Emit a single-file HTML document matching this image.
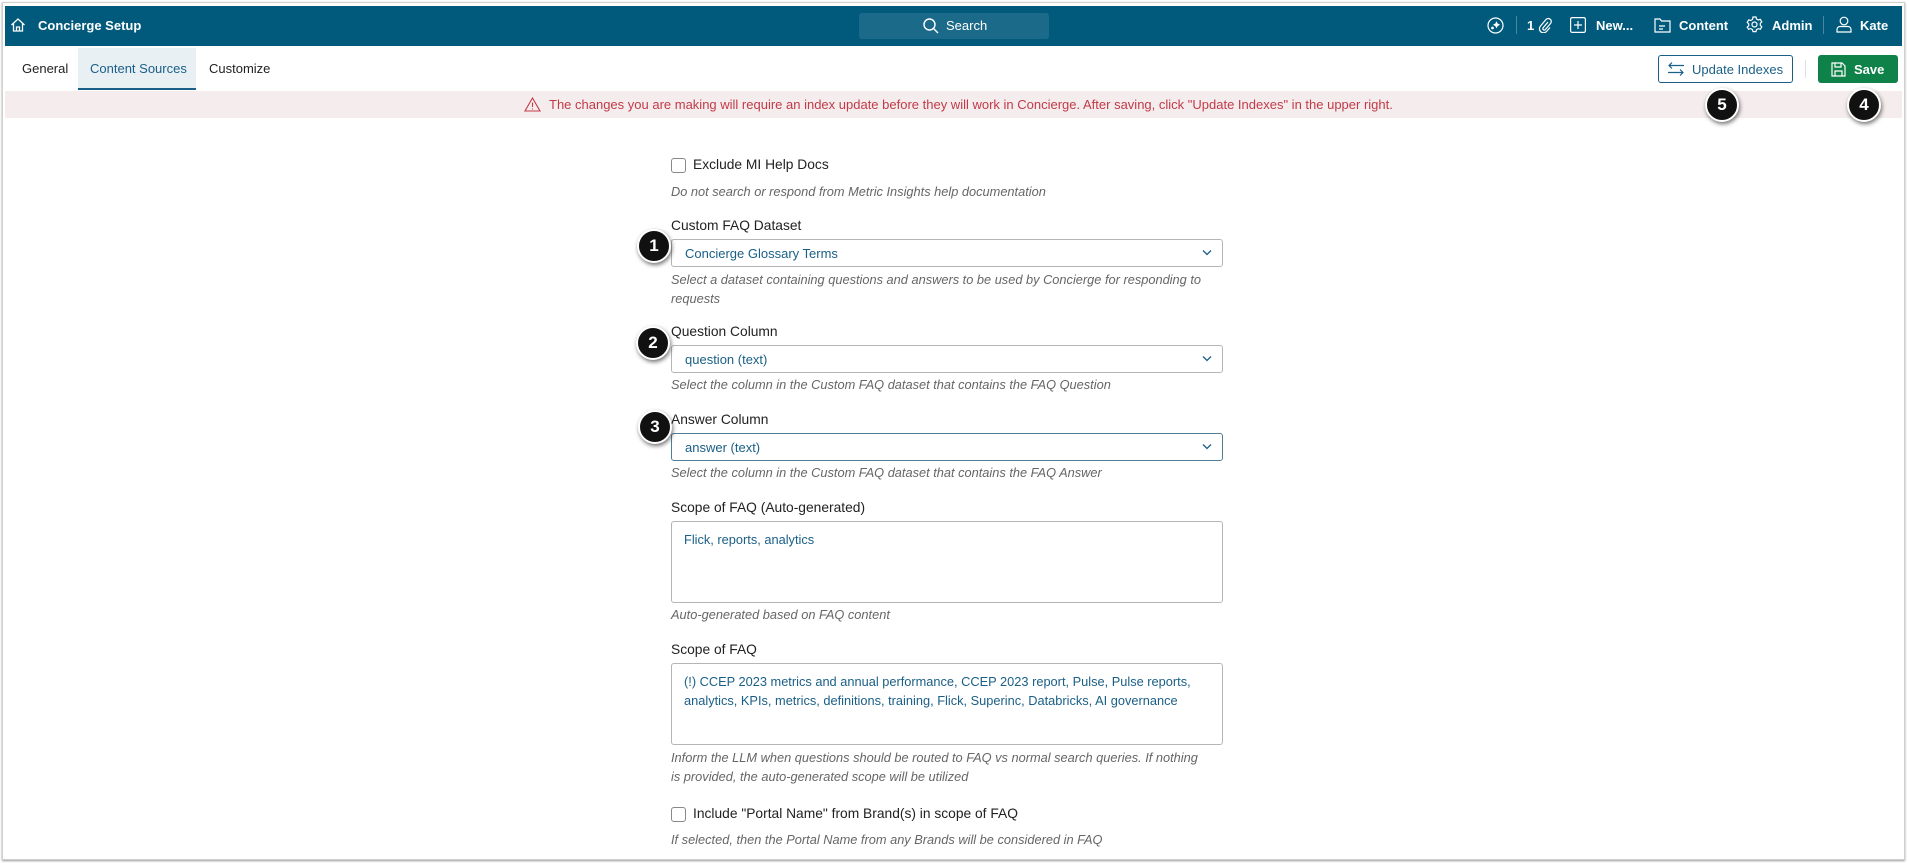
<!DOCTYPE html>
<html><head><meta charset="utf-8"><style>
*{box-sizing:border-box;margin:0;padding:0}
body{width:1909px;height:863px;background:#fff;font-family:"Liberation Sans",Arial,sans-serif;position:relative;overflow:hidden;color:#222}
.a{position:absolute;white-space:nowrap}
.frame{position:absolute;left:2px;top:2px;width:1903px;height:858px;border:1px solid #d0d0d0;box-shadow:0 1px 2px #999}
.hdr{position:absolute;left:5px;top:6px;width:1897px;height:40px;background:#015a7c}
.w{color:#fff;font-size:13px;font-weight:bold}
.lbl{font-size:13.8px;color:#222}
.help{font-size:12.8px;color:#666;font-style:italic}
.sel{position:absolute;left:671px;width:552px;height:28px;border:1px solid #b5b5b5;border-radius:3px;font-size:13px;color:#1a5f86;padding:6px 13px}
.sel svg{position:absolute;right:10px;top:9px}
.ta{position:absolute;left:671px;width:552px;border:1px solid #b5b5b5;border-radius:3px;font-size:12.8px;color:#1a5f86;padding:8px 12px;line-height:19px}
.cb{position:absolute;left:671px;width:15px;height:15px;border:1px solid #888;border-radius:3px}
.b{position:absolute;width:34px;height:34px;border-radius:50%;background:#111;border:2px solid #fff;box-shadow:1px 2px 4px rgba(0,0,0,.55);color:#fff;font-weight:bold;font-size:17px;text-align:center;line-height:30px}
</style></head><body>
<div class="frame"></div>
<div class="hdr"></div>
<svg class="a" style="left:10px;top:17px" width="16" height="16" viewBox="0 0 16 16" fill="none" stroke="#fff" stroke-width="1.3"><path d="M1.5 8 8 2l6.5 6M3.5 6.5V14h9V6.5M6.5 14v-4h3v4"/></svg>
<div class="a w" style="left:38px;top:18px">Concierge Setup</div>
<div class="a" style="left:859px;top:13px;width:190px;height:26px;background:#1c6a89;border-radius:3px"></div>
<svg class="a" style="left:922px;top:17px" width="18" height="18" viewBox="0 0 18 18" fill="none" stroke="#fff" stroke-width="1.4"><circle cx="7.5" cy="7.5" r="5.5"/><path d="M11.5 11.5 16 16"/></svg>
<div class="a" style="left:946px;top:18px;color:#fff;font-size:13px">Search</div>
<svg class="a" style="left:1487px;top:17px" width="17" height="17" viewBox="0 0 17 17" fill="none" stroke="#fff" stroke-width="1.2"><circle cx="8.5" cy="8.5" r="7.5"/><path d="M9.5 5.5l.8 1.5 1.5.8-1.5.8-.8 1.5-.8-1.5-1.5-.8 1.5-.8z" fill="#fff"/><circle cx="5.5" cy="11" r=".8" fill="#fff"/></svg>
<div class="a" style="left:1516px;top:16px;width:1px;height:18px;background:#4b86a0"></div>
<div class="a w" style="left:1527px;top:18px">1</div>
<svg class="a" style="left:1538px;top:17px" width="14" height="16" viewBox="0 0 14 16" fill="none" stroke="#fff" stroke-width="1.2"><path d="M10 5 5 11a1.5 1.5 0 0 0 2 2l5.5-6.5a3 3 0 0 0-4.5-4L2.5 9a4 4 0 0 0 6 5.5L12 10.5"/></svg>
<svg class="a" style="left:1570px;top:17px" width="16" height="16" viewBox="0 0 16 16" fill="none" stroke="#fff" stroke-width="1.2"><rect x=".6" y=".6" width="14.8" height="14.8" rx="1.5"/><path d="M8 4v8M4 8h8"/></svg>
<div class="a w" style="left:1596px;top:18px">New...</div>
<svg class="a" style="left:1654px;top:17px" width="17" height="16" viewBox="0 0 17 16" fill="none" stroke="#fff" stroke-width="1.2"><path d="M1 2h5l1.5 2H16v11H1z M5 9h6M5 12h4"/></svg>
<div class="a w" style="left:1679px;top:18px">Content</div>
<svg class="a" style="left:1746px;top:16px" width="17" height="17" viewBox="0 0 17 17" fill="none" stroke="#fff" stroke-width="1.2"><circle cx="8.5" cy="8.5" r="2.5"/><path d="M7 1h3l.5 2 1.8 1 2-.7 1.5 2.6-1.5 1.4v2l1.5 1.4-1.5 2.6-2-.7-1.8 1-.5 2H7l-.5-2-1.8-1-2 .7L1.2 11.2l1.5-1.4v-2L1.2 6.4l1.5-2.6 2 .7 1.8-1z"/></svg>
<div class="a w" style="left:1772px;top:18px">Admin</div>
<div class="a" style="left:1823px;top:16px;width:1px;height:18px;background:#4b86a0"></div>
<svg class="a" style="left:1836px;top:16px" width="16" height="17" viewBox="0 0 16 17" fill="none" stroke="#fff" stroke-width="1.2"><circle cx="8" cy="5" r="3.8"/><path d="M1 16v-2.5a3 3 0 0 1 3-3h8a3 3 0 0 1 3 3V16z"/></svg>
<div class="a w" style="left:1860px;top:18px">Kate</div>

<div class="a" style="left:78px;top:48px;width:118px;height:42px;background:#e8f0f4;border-bottom:2px solid #1a5f86"></div>
<div class="a lbl" style="left:22px;top:61px;font-size:13px">General</div>
<div class="a lbl" style="left:90px;top:61px;font-size:13px;color:#1a5f86">Content Sources</div>
<div class="a lbl" style="left:209px;top:61px;font-size:13px">Customize</div>

<div class="a" style="left:1658px;top:55px;width:135px;height:28px;border:1px solid #1a5f86;border-radius:3px;background:#fff"></div>
<svg class="a" style="left:1667px;top:61px" width="18" height="16" viewBox="0 0 18 16" fill="none" stroke="#1a5f86" stroke-width="1.2"><path d="M17 4.5H2M5 1.5l-3 3 3 3M1 11.5h15M13 8.5l3 3-3 3"/></svg>
<div class="a" style="left:1692px;top:62px;font-size:13px;color:#1a5f86">Update Indexes</div>
<div class="a" style="left:1805px;top:60px;width:1px;height:18px;background:#e0e0e0"></div>
<div class="a" style="left:1818px;top:55px;width:80px;height:28px;background:#0e8248;border-radius:3px"></div>
<svg class="a" style="left:1831px;top:62px" width="15" height="15" viewBox="0 0 15 15" fill="none" stroke="#fff" stroke-width="1.2"><path d="M1 1h10l3 3v10H1z M4 1v4h6V1M4 14V9h7v5"/></svg>
<div class="a w" style="left:1854px;top:62px">Save</div>

<div class="a" style="left:5px;top:91px;width:1897px;height:27px;background:#f5eded"></div>
<svg class="a" style="left:524px;top:97px" width="17" height="15" viewBox="0 0 17 15" fill="none" stroke="#c23a48" stroke-width="1.1"><path d="M8.5 1 16 14H1z M8.5 5.5v4.5M8.5 11.5v1"/></svg>
<div class="a" style="left:549px;top:97px;font-size:13px;color:#c23a48">The changes you are making will require an index update before they will work in Concierge. After saving, click "Update Indexes" in the upper right.</div>

<div class="cb" style="top:158px"></div>
<div class="a lbl" style="left:693px;top:157px">Exclude MI Help Docs</div>
<div class="a help" style="left:671px;top:184px">Do not search or respond from Metric Insights help documentation</div>

<div class="a lbl" style="left:671px;top:218px">Custom FAQ Dataset</div>
<div class="sel" style="top:239px">Concierge Glossary Terms<svg width="10" height="7" viewBox="0 0 10 7" fill="none" stroke="#1a5f86" stroke-width="1.3"><path d="M1 1.5 5 5.5 9 1.5"/></svg></div>
<div class="a help" style="left:671px;top:270px;line-height:19px">Select a dataset containing questions and answers to be used by Concierge for responding to<br>requests</div>

<div class="a lbl" style="left:671px;top:324px">Question Column</div>
<div class="sel" style="top:345px">question (text)<svg width="10" height="7" viewBox="0 0 10 7" fill="none" stroke="#1a5f86" stroke-width="1.3"><path d="M1 1.5 5 5.5 9 1.5"/></svg></div>
<div class="a help" style="left:671px;top:377px">Select the column in the Custom FAQ dataset that contains the FAQ Question</div>

<div class="a lbl" style="left:671px;top:412px">Answer Column</div>
<div class="sel" style="top:433px;border-color:#4f7f96">answer (text)<svg width="10" height="7" viewBox="0 0 10 7" fill="none" stroke="#1a5f86" stroke-width="1.3"><path d="M1 1.5 5 5.5 9 1.5"/></svg></div>
<div class="a help" style="left:671px;top:465px">Select the column in the Custom FAQ dataset that contains the FAQ Answer</div>

<div class="a lbl" style="left:671px;top:500px">Scope of FAQ (Auto-generated)</div>
<div class="ta" style="top:521px;height:82px">Flick, reports, analytics</div>
<div class="a help" style="left:671px;top:607px">Auto-generated based on FAQ content</div>

<div class="a lbl" style="left:671px;top:642px">Scope of FAQ</div>
<div class="ta" style="top:663px;height:82px">(!) CCEP 2023 metrics and annual performance, CCEP 2023 report, Pulse, Pulse reports,<br>analytics, KPIs, metrics, definitions, training, Flick, Superinc, Databricks, AI governance</div>
<div class="a help" style="left:671px;top:748px;line-height:19px">Inform the LLM when questions should be routed to FAQ vs normal search queries. If nothing<br>is provided, the auto-generated scope will be utilized</div>

<div class="cb" style="top:807px"></div>
<div class="a lbl" style="left:693px;top:806px">Include "Portal Name" from Brand(s) in scope of FAQ</div>
<div class="a help" style="left:671px;top:832px">If selected, then the Portal Name from any Brands will be considered in FAQ</div>

<div class="b" style="left:637px;top:229px">1</div>
<div class="b" style="left:636px;top:326px">2</div>
<div class="b" style="left:638px;top:410px">3</div>
<div class="b" style="left:1705px;top:88px">5</div>
<div class="b" style="left:1847px;top:88px">4</div>
</body></html>
